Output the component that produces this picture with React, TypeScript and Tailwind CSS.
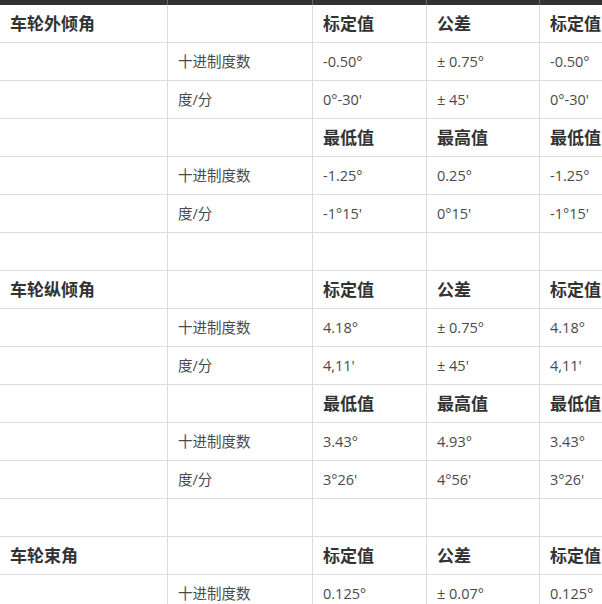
import React from "react";

type Row = { a?: string; b?: string; c?: string; d?: string; e?: string; head?: boolean };

const rows: Row[] = [
  { a: "车轮外倾角", c: "标定值", d: "公差", e: "标定值", head: true },
  { b: "十进制度数", c: "-0.50°", d: "± 0.75°", e: "-0.50°" },
  { b: "度/分", c: "0°-30'", d: "± 45'", e: "0°-30'" },
  { c: "最低值", d: "最高值", e: "最低值", head: true },
  { b: "十进制度数", c: "-1.25°", d: "0.25°", e: "-1.25°" },
  { b: "度/分", c: "-1°15'", d: "0°15'", e: "-1°15'" },
  {},
  { a: "车轮纵倾角", c: "标定值", d: "公差", e: "标定值", head: true },
  { b: "十进制度数", c: "4.18°", d: "± 0.75°", e: "4.18°" },
  { b: "度/分", c: "4,11'", d: "± 45'", e: "4,11'" },
  { c: "最低值", d: "最高值", e: "最低值", head: true },
  { b: "十进制度数", c: "3.43°", d: "4.93°", e: "3.43°" },
  { b: "度/分", c: "3°26'", d: "4°56'", e: "3°26'" },
  {},
  { a: "车轮束角", c: "标定值", d: "公差", e: "标定值", head: true },
  { b: "十进制度数", c: "0.125°", d: "± 0.07°", e: "0.125°" },
];

const font = { fontFamily: '"Open Sans", "Noto Sans CJK SC", sans-serif' };

function Cell({ w, text, bold }: { w: string; text?: string; bold?: boolean }) {
  return (
    <div
      className={`${w} shrink-0 h-full flex items-center pl-[10px] border-r border-[#dcdcdc] whitespace-nowrap ${
        bold ? "font-bold text-[17px] text-[#333]" : "text-[14.5px] text-[#4a4a4a]"
      }`}
    >
      {text}
    </div>
  );
}

export default function App() {
  return (
    <div className="w-[602px] h-[604px] overflow-hidden bg-white" style={font}>
      <div className="w-[720px]">
        <div className="flex h-[5px] bg-[#333]">
          <div className="w-[168px] border-r border-[#666]" />
          <div className="w-[145px] border-r border-[#666]" />
          <div className="w-[114px] border-r border-[#666]" />
          <div className="w-[113px] border-r border-[#666]" />
          <div className="w-[180px]" />
        </div>
        {rows.map((r, i) => (
          <div key={i} className="flex h-[38px] border-b border-[#dcdcdc]">
            <Cell w="w-[168px]" text={r.a} bold />
            <Cell w="w-[145px]" text={r.b} />
            <Cell w="w-[114px]" text={r.c} bold={r.head} />
            <Cell w="w-[113px]" text={r.d} bold={r.head} />
            <Cell w="w-[180px]" text={r.e} bold={r.head} />
          </div>
        ))}
      </div>
    </div>
  );
}
